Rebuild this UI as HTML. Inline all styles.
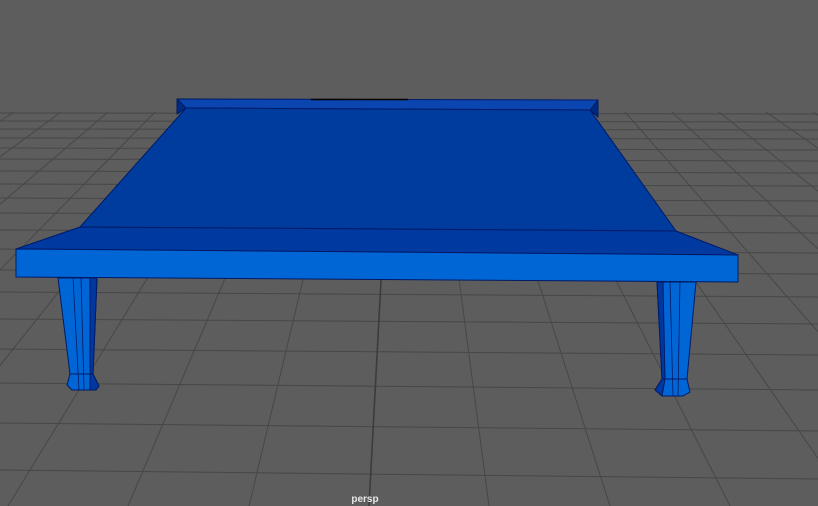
<!DOCTYPE html>
<html><head><meta charset="utf-8"><style>
html,body{margin:0;padding:0;background:#5d5d5d;overflow:hidden}
svg{display:block}
text{font-family:"Liberation Sans",sans-serif}
</style></head><body>
<svg width="818" height="506" viewBox="0 0 818 506" xmlns="http://www.w3.org/2000/svg">
<rect width="818" height="506" fill="#5d5d5d"/>
<g stroke="#474747" stroke-width="1" fill="none">
<path d="M0 113 L818 114 M0 121 L818 122 M0 129 L818 130 M0 138 L818 139 M0 148 L818 150 M0 159 L818 161 M0 171 L818 173 M0 184 L818 186 M0 198 L818 201 M0 213 L818 216 M0 230 L818 233 M0 249 L818 253 M0 270 L818 274 M0 292 L818 297 M0 319 L818 324 M0 349 L818 355 M0 383 L818 390 M0 423 L818 431 M0 470 L818 479"/>
<path d="M-33 112 L-715 506 M14 112 L-594 506 M61 112 L-474 506 M108 112 L-353 506 M155 112 L-232 506 M202 112 L-112 506 M249 112 L8 506 M296 112 L128 506 M343 112 L249 506 M437 112 L489 506 M484 112 L610 506 M531 112 L730 506 M578 112 L851 506 M625 112 L971 506 M672 112 L1092 506 M719 112 L1212 506 M766 112 L1333 506 M813 112 L1453 506 M860 112 L1574 506"/>
</g>
<path d="M390 112 L369 506" stroke="#3c3c3c" stroke-width="1.6" fill="none"/>
<g stroke="#001a66" stroke-width="1" stroke-linejoin="round">
<polygon points="177,99 598,100 598,117 590,110 186,108 177,114" fill="#0a45b0"/>
<polygon points="177,99 186,108 177,114" fill="#002a80"/>
<polygon points="598,100 590,110 598,117" fill="#002a80"/>
<polygon points="186,108 590,110 676,231 80,227" fill="#003c9e"/>
<polygon points="80,227 676,231 738,255 16,249" fill="#0039a0"/>
<polygon points="16,249 738,255 738,282 16,277" fill="#0066d6"/>
<polygon points="58,278 97,278 93,374 70,374" fill="#0066d6"/>
<polygon points="90,278 97,278 93,374 90,374" fill="#0038a0"/>
<polygon points="70,374 93,374 99,386 96,390 72,390 67,385" fill="#0066d6"/>
<polygon points="90,374 93,374 99,386 96,390 90,390" fill="#0038a0"/>
<polygon points="657,282 696,282 687,379 662,379" fill="#0066d6"/>
<polygon points="657,282 663,282 665,379 662,379" fill="#0038a0"/>
<polygon points="662,379 687,379 690,392 683,396 663,396 655,390" fill="#0066d6"/>
<polygon points="662,379 665,379 662,396 655,390" fill="#0038a0"/>
</g>
<g stroke="#001a66" stroke-width="0.8" fill="none">
<path d="M73 278 L79 390 M81 278 L84 390 M670 282 L673 396 M680 282 L678 396"/>
</g>
<line x1="311" y1="99.5" x2="408" y2="99.5" stroke="#000" stroke-width="1.5"/>
<text x="365" y="502" font-size="10" font-weight="bold" fill="#e8e8e8" text-anchor="middle">persp</text>
</svg>
</body></html>
